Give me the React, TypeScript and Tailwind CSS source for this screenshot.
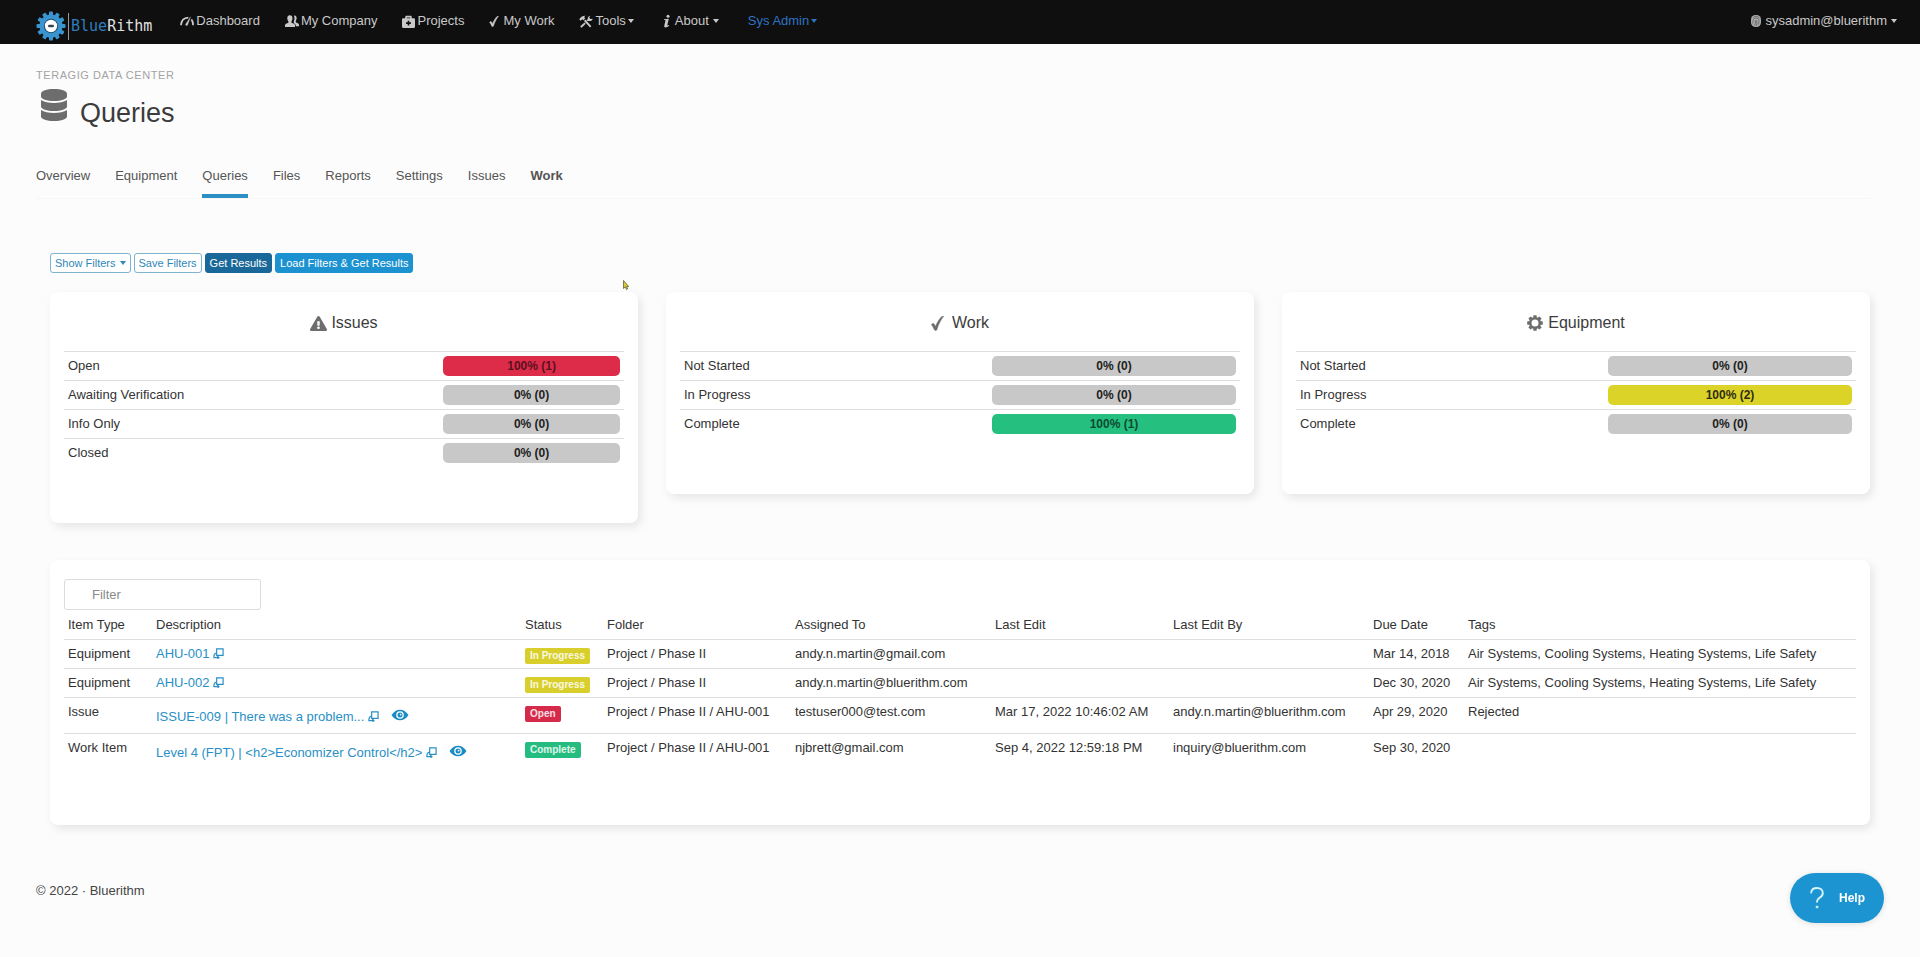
import { FaBriefcaseMedical, FaDatabase, FaExclamationTriangle } from "react-icons/fa";
import type { ReactNode } from "react";

type Meter = { label: string; value: string; color: string };
type Item = {
  type: string;
  title: string;
  watched: boolean;
  status: "In Progress" | "Open" | "Complete";
  folder: string;
  assignedTo: string;
  lastEdit: string;
  lastEditBy: string;
  dueDate: string;
  tags: string;
};

const GRAY = "bg-[#c8c8c8] text-[#222]";
const RED = "bg-[#dd2c49] text-[#5c1020]";
const YELLOW = "bg-[#dcd328] text-[#2f2d10]";
const GREEN = "bg-[#25c080] text-[#0c4a30]";

const issues: Meter[] = [
  { label: "Open", value: "100% (1)", color: RED },
  { label: "Awaiting Verification", value: "0% (0)", color: GRAY },
  { label: "Info Only", value: "0% (0)", color: GRAY },
  { label: "Closed", value: "0% (0)", color: GRAY },
];

const work: Meter[] = [
  { label: "Not Started", value: "0% (0)", color: GRAY },
  { label: "In Progress", value: "0% (0)", color: GRAY },
  { label: "Complete", value: "100% (1)", color: GREEN },
];

const equipment: Meter[] = [
  { label: "Not Started", value: "0% (0)", color: GRAY },
  { label: "In Progress", value: "100% (2)", color: YELLOW },
  { label: "Complete", value: "0% (0)", color: GRAY },
];

const items: Item[] = [
  {
    type: "Equipment",
    title: "AHU-001",
    watched: false,
    status: "In Progress",
    folder: "Project / Phase II",
    assignedTo: "andy.n.martin@gmail.com",
    lastEdit: "",
    lastEditBy: "",
    dueDate: "Mar 14, 2018",
    tags: "Air Systems, Cooling Systems, Heating Systems, Life Safety",
  },
  {
    type: "Equipment",
    title: "AHU-002",
    watched: false,
    status: "In Progress",
    folder: "Project / Phase II",
    assignedTo: "andy.n.martin@bluerithm.com",
    lastEdit: "",
    lastEditBy: "",
    dueDate: "Dec 30, 2020",
    tags: "Air Systems, Cooling Systems, Heating Systems, Life Safety",
  },
  {
    type: "Issue",
    title: "ISSUE-009 | There was a problem...",
    watched: true,
    status: "Open",
    folder: "Project / Phase II / AHU-001",
    assignedTo: "testuser000@test.com",
    lastEdit: "Mar 17, 2022 10:46:02 AM",
    lastEditBy: "andy.n.martin@bluerithm.com",
    dueDate: "Apr 29, 2020",
    tags: "Rejected",
  },
  {
    type: "Work Item",
    title: "Level 4 (FPT) | <h2>Economizer Control</h2>",
    watched: true,
    status: "Complete",
    folder: "Project / Phase II / AHU-001",
    assignedTo: "njbrett@gmail.com",
    lastEdit: "Sep 4, 2022 12:59:18 PM",
    lastEditBy: "inquiry@bluerithm.com",
    dueDate: "Sep 30, 2020",
    tags: "",
  },
];

const statusColor = {
  "In Progress": "bg-[#d8ce2c]",
  Open: "bg-[#d52a4a]",
  Complete: "bg-[#25bd7f]",
};

const columns = [
  { label: "Item Type", width: "w-[88px]" },
  { label: "Description", width: "w-[369px]" },
  { label: "Status", width: "w-[82px]" },
  { label: "Folder", width: "w-[188px]" },
  { label: "Assigned To", width: "w-[200px]" },
  { label: "Last Edit", width: "w-[178px]" },
  { label: "Last Edit By", width: "w-[200px]" },
  { label: "Due Date", width: "w-[95px]" },
  { label: "Tags", width: "" },
];

const tabs = ["Overview", "Equipment", "Queries", "Files", "Reports", "Settings", "Issues", "Work"];

function Caret() {
  return <span className="border-x-[3px] border-t-4 border-x-transparent border-t-current" />;
}

function GaugeIcon() {
  return (
    <svg viewBox="0 0 14 12" className="h-3 w-[14px]" fill="none" stroke="currentColor">
      <path d="M1 10.300C1.200 5.800 4 2.800 8.400 2.600" strokeWidth="1.700" />
      <path d="M11.400 4.400c1.200 1.500 1.700 3.500 1.700 5.900" strokeWidth="1.700" />
      <path d="M10.600 1.800 5.600 9.200c-.4 1.200 1.200 2 2 .9z" fill="currentColor" strokeWidth=".3" />
    </svg>
  );
}

function UsersIcon() {
  return (
    <svg viewBox="0 0 14 12" className="h-3 w-[14px]" fill="currentColor">
      <path d="M9.600.6c1.300 0 2 1 2 2.600 0 1.200-.4 2-.8 2.500v1.600l2.400 1.100c.5.300.8.700.8 1.300v1.500h-3.200c0-1.300-.4-2-1.500-2.600l-.5-.3V6.200c.5-.8.700-1.700.7-2.900 0-1-.2-1.900-.6-2.600.2-.1.400-.1.700-.1z" />
      <path d="M4.900.3c1.700 0 2.600 1.200 2.600 3 0 1.300-.5 2.300-1 2.900v1.500l2.500 1.100c.7.400 1 .8 1 1.500V12H0v-1.700c0-.7.300-1.100 1-1.500l2.400-1.100V6.200c-.6-.6-1.100-1.600-1.100-2.900C2.300 1.500 3.200.3 4.900.3z" />
    </svg>
  );
}

function CheckIcon({ className }: { className: string }) {
  return (
    <svg viewBox="0 0 12 14" className={className} fill="currentColor" stroke="currentColor" strokeWidth=".5">
      <path d="M.3 8.100c.5-.7 1.100-1.100 1.700-1.100.9 0 1.500 1.600 2.100 2.900C5.500 6.300 7.500 3 9.800.7c.4-.4 1.400-.6 2-.4C9.300 3.200 7 7.500 5.400 12.800c-.3.900-1.900 1-2.300.1C2.400 11.100 1.500 9.300.3 8.100z" />
    </svg>
  );
}

function ToolsIcon() {
  return (
    <svg viewBox="0 0 14 13" className="h-[13px] w-[14px]" fill="currentColor">
      <path d="M.3 4.600C1.300 2.200 3.300.7 7 .8c-.9.300-1.700.8-1.700 1.500l.8 1.200-1.700 1.700-1.200-1-1.600 1.600z" />
      <path d="m5 6 1.500-1.400 5.800 6.600-1.300 1.300z" />
      <path d="M8.400 6 7.600 5.200l1.200-1.100C8.500 2.500 9.300 1 11.300.7L10.200 2.600l1.200 1.500 2.300-.4c-.4 1.800-1.900 2.500-3.700 2.200z" />
      <path d="m5.500 7.500 1.200 1.300-3.800 3.700c-.9.300-1.800-.6-1.400-1.500z" />
    </svg>
  );
}

function InfoIcon() {
  return (
    <svg viewBox="0 0 8 14" className="h-[14px] w-2" fill="currentColor">
      <circle cx="5" cy="2.200" r="1.500" />
      <path d="M1 5.300 5.800 4.800 4.300 11c-.1.600.4.600 1.500 0l.2.700C4.800 12.800 3.700 13.400 2.700 13.400c-1.200 0-1.700-.8-1.400-2l1.100-4.500c.2-.7 0-.9-.6-.9H.9z" />
    </svg>
  );
}

function GearIcon() {
  return (
    <svg viewBox="0 0 16 16" className="mr-px size-4 text-[#6d6d6d]" fill="currentColor">
      {[0, 45, 90, 135, 180, 225, 270, 315].map((a) => (
        <rect key={a} x="6.300" y="0.200" width="3.400" height="3" rx=".5" transform={`rotate(${a} 8 8)`} />
      ))}
      <circle cx="8" cy="8" r="4.800" fill="none" stroke="currentColor" strokeWidth="2.600" />
    </svg>
  );
}

function FingerprintIcon() {
  return (
    <svg viewBox="0 0 10 12" className="h-3 w-[10px]">
      <rect width="10" height="12" rx="4.500" fill="#a9a9a9" />
      <path
        d="M1.500 8.500C2.500 6.500 1.500 3 5 3s3 3 2.500 6.500M3.500 10.500C5 8.500 4 5.200 5 5.200s1.200 3 .3 5.800M2 2.800C4 .8 6.500 1 8.500 3.200"
        fill="none"
        stroke="#4a4a4a"
        strokeWidth=".6"
      />
    </svg>
  );
}

function Logo() {
  return (
    <a href="#" className="flex items-center self-end pb-[3px] font-['DejaVu_Sans_Mono',monospace] text-[15px] leading-none">
      <svg viewBox="0 0 30 30" className="size-[30px]">
        <g fill="#3a94cf">
          <circle cx="15" cy="15" r="11.500" />
          {[0, 30, 60, 90, 120, 150].map((a) => (
            <rect key={a} x="13" y="0.500" width="4" height="29" rx="1" transform={`rotate(${a} 15 15)`} />
          ))}
        </g>
        <circle cx="15" cy="15" r="7.200" fill="#1b4a6b" />
        <circle cx="15" cy="15" r="6.200" fill="#fff" />
        <rect x="12" y="13.700" width="6" height="2.600" rx="1.300" fill="#3a4550" />
      </svg>
      <span className="mx-0.5 h-[27px] w-px bg-[#9a9a9a]" />
      <span className="text-[#2f7dbb]">Blue</span>
      <span className="text-[#e0e0e0]">Rithm</span>
    </a>
  );
}

function NavBar() {
  return (
    <header className="flex h-11 bg-[#0f0f0f] pr-[23px] pl-9 text-[13px] leading-5 whitespace-nowrap text-[#c9c9c9]">
      <Logo />
      <nav className="ml-7 flex h-[42px] items-center gap-[25px]">
        <a href="#" className="flex items-center gap-0.5"><GaugeIcon />Dashboard</a>
        <a href="#" className="flex items-center gap-0.5"><UsersIcon />My Company</a>
        <a href="#" className="flex items-center gap-0.5"><FaBriefcaseMedical className="size-[13px]" />Projects</a>
        <a href="#" className="flex items-center gap-1"><CheckIcon className="h-[11px] w-[10px]" />My Work</a>
        <button className="flex items-center gap-0.5"><ToolsIcon />Tools<Caret /></button>
        <button className="ml-1 flex items-center gap-1"><InfoIcon />About<Caret /></button>
        <button className="ml-1 flex items-center gap-0.5 text-[#2e73c2]">Sys Admin<Caret /></button>
      </nav>
      <button className="ml-auto flex h-[42px] items-center gap-1">
        <FingerprintIcon />
        sysadmin@bluerithm
        <Caret />
      </button>
    </header>
  );
}

function MeterCard({ icon, title, meters, barWidth }: { icon: ReactNode; title: string; meters: Meter[]; barWidth: string }) {
  return (
    <section className="rounded-lg bg-white px-[14px] pt-4 pb-[56px] shadow-[3px_4px_10px_rgba(0,0,0,0.09)]">
      <h2 className="mb-[13px] flex h-[30px] items-center justify-center gap-1 text-base text-[#3c3c3c]">
        {icon}
        {title}
      </h2>
      <table className="w-full table-fixed">
        <tbody>
          {meters.map((m) => (
            <tr key={m.label} className="border-t border-[#dedede]">
              <th scope="row" className="px-1 text-left text-[13px] font-normal text-[#333]">{m.label}</th>
              <td className={`${barWidth} px-1 py-1`}>
                <div className={`h-5 rounded-[5px] text-center text-xs leading-5 font-bold ${m.color}`}>{m.value}</div>
              </td>
            </tr>
          ))}
        </tbody>
      </table>
    </section>
  );
}

function OpenIcon() {
  return (
    <svg viewBox="0 0 12 12" className="size-[11px]" fill="none" stroke="currentColor" strokeWidth="1.300">
      <path d="M4 1h7v7H4z" />
      <path d="M4 5.500C1.500 5.800.8 7.500 1 10.500h4.500M4.500 8.500l2 2-1.500 1.300" />
    </svg>
  );
}

function EyeIcon() {
  return (
    <svg viewBox="0 0 18 12" className="h-3 w-[18px]">
      <path d="M.5 6C3 2.300 5.700.7 9 .7S15 2.300 17.500 6C15 9.700 12.300 11.300 9 11.300S3 9.700.5 6z" fill="#1a8cc4" />
      <circle cx="9" cy="6" r="3.800" fill="#fff" />
      <circle cx="9" cy="6" r="2.500" fill="#1a8cc4" />
      <circle cx="9.600" cy="5.600" r=".9" fill="#fff" />
    </svg>
  );
}

function ResultsTable() {
  return (
    <table className="w-full table-fixed text-[13px] leading-5 whitespace-nowrap text-[#333]">
      <thead>
        <tr>
          {columns.map((c) => (
            <th key={c.label} className={`${c.width} h-[29px] px-1 pt-0.5 text-left font-normal`}>{c.label}</th>
          ))}
        </tr>
      </thead>
      <tbody>
        {items.map((item) => (
          <tr key={item.title} className="border-t border-[#dedede] align-top">
            <td className="px-1 py-1">{item.type}</td>
            <td className={`px-1 ${item.watched ? "pt-[9px] pb-1.5" : "py-1"}`}>
              <div className="flex items-center gap-1 text-[#2a8fc6]">
                <a href="#">{item.title}</a>
                <a href="#" aria-label="Open in new window"><OpenIcon /></a>
                {item.watched && <button aria-label="Watching" className="ml-2 pb-1"><EyeIcon /></button>}
              </div>
            </td>
            <td className="px-1 pt-2">
              <span className={`block w-fit rounded-xs px-[5px] text-[10px] leading-4 font-bold text-white/85 ${statusColor[item.status]}`}>
                {item.status}
              </span>
            </td>
            <td className="px-1 py-1">{item.folder}</td>
            <td className="px-1 py-1">{item.assignedTo}</td>
            <td className="px-1 py-1">{item.lastEdit}</td>
            <td className="px-1 py-1">{item.lastEditBy}</td>
            <td className="px-1 py-1">{item.dueDate}</td>
            <td className="px-1 py-1">{item.tags}</td>
          </tr>
        ))}
      </tbody>
    </table>
  );
}

export default function App() {
  return (
    <div className="min-h-screen bg-[#fcfcfc] font-['Liberation_Sans',Arial,sans-serif]">
      <NavBar />
      <main className="px-9 pt-[23px]">
        <p className="text-[11px] leading-4 tracking-wider text-[#a3a3a3]">TERAGIG DATA CENTER</p>
        <h1 className="flex items-end gap-[13px] pt-1.5 pl-[5px] text-[27px] leading-9 text-[#3c3c3c]">
          <FaDatabase className="mb-[10px] h-8 w-[26px] text-[#6d6d6d]" preserveAspectRatio="none" />
          Queries
        </h1>
        <nav className="mt-[35px] mr-[14px] flex gap-[25px] border-b border-[#f6f6f6] text-[13px] text-[#555]">
          {tabs.map((t) => (
            <a
              key={t}
              href="#"
              className={`border-b-4 pb-2 leading-5 ${t === "Queries" ? "border-[#2c8fc4]" : "border-transparent"} ${t === "Work" ? "font-bold" : ""}`}
            >
              {t}
            </a>
          ))}
        </nav>

        <div className="mx-[14px] mt-[54px]">
          <div className="relative flex gap-[3px] text-[11px] leading-[18px]">
            <button className="flex items-center gap-1 rounded-[3px] border border-[#7fb4d0] bg-white px-1 text-[#2f87b8]">Show Filters<Caret /></button>
            <button className="rounded-[3px] border border-[#7fb4d0] bg-white px-1 text-[#2f87b8]">Save Filters</button>
            <button className="rounded-[3px] border border-[#1a6899] bg-[#1a6899] px-1 text-white">Get Results</button>
            <button className="rounded-[3px] border border-[#1c92d0] bg-[#1c92d0] px-1 text-white">Load Filters &amp; Get Results</button>
            <svg viewBox="0 0 6 10" className="absolute top-[27px] left-[573px] h-[10px] w-1.5">
              <path d="M.5.5v8l1.800-1.600L3.500 9.500l1.200-.6-1-2.400h2z" fill="#d6cb3a" stroke="#55521f" strokeWidth=".7" />
            </svg>
          </div>

          <div className="mt-[19px] grid grid-cols-3 items-start gap-7">
            <MeterCard
              title="Issues"
              meters={issues}
              barWidth="w-[33%]"
              icon={<FaExclamationTriangle className="size-[17px] text-[#6d6d6d]" />}
            />
            <MeterCard title="Work" meters={work} barWidth="w-[45%]" icon={<CheckIcon className="mr-1 h-[15px] w-[13px] text-[#6d6d6d]" />} />
            <MeterCard title="Equipment" meters={equipment} barWidth="w-[45%]" icon={<GearIcon />} />
          </div>

          <section className="mt-[37px] rounded-lg bg-white px-[14px] pt-[19px] pb-[56px] shadow-[3px_4px_10px_rgba(0,0,0,0.09)]">
            <input
              type="text"
              aria-label="Filter"
              placeholder="Filter"
              className="block h-[31px] w-[197px] rounded-[3px] border border-[#dcdcdc] pr-2 pl-[27px] text-[13px] placeholder:text-[#8a8a8a]"
            />
            <ResultsTable />
          </section>
        </div>
      </main>
      <footer className="px-9 pt-[56px] text-[13px] leading-5 text-[#444]">© 2022 · Bluerithm</footer>
      <button className="fixed right-9 bottom-[34px] flex h-[50px] w-[94px] items-center rounded-full bg-[#1c94d2] pl-5 text-white shadow-[0_1px_6px_rgba(0,0,0,0.12)]">
        <svg viewBox="0 0 14 22" className="mr-[15px] h-[22px] w-[14px]" fill="none" stroke="#d4f3fb" strokeWidth="1.900" strokeLinecap="round">
          <path d="M1.200 5.500C1.500 2.500 3.800 1 7 1s5.800 1.800 5.800 5c0 2.500-1.500 3.800-3.300 4.900C7.800 12 7 12.900 7 14.800" />
          <circle cx="7" cy="20" r="1.100" fill="#d4f3fb" strokeWidth=".6" />
        </svg>
        <span className="text-xs font-bold">Help</span>
      </button>
    </div>
  );
}
